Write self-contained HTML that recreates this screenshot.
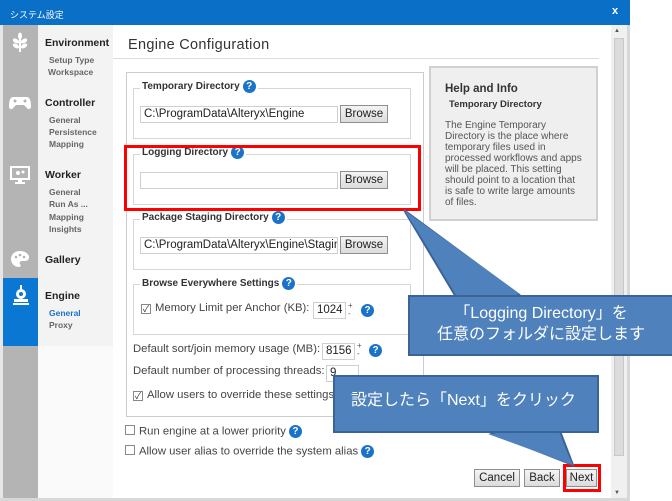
<!DOCTYPE html>
<html><head><meta charset="utf-8"><style>
*{margin:0;padding:0;box-sizing:border-box}
body{width:672px;height:501px;background:#fff;position:relative;overflow:hidden;font-family:"Liberation Sans","Noto Sans CJK JP",sans-serif;font-size:12px;color:#333}
.a{position:absolute}
.fs{position:absolute;border:1px solid #d6d6d6}
.lg{position:absolute;background:#fff;font-weight:bold;font-size:10px;color:#333;padding:0 2px;white-space:nowrap}
.q{display:inline-block;width:13px;height:13px;border-radius:50%;background:#1a73c8;color:#fff;font-size:10px;font-weight:bold;text-align:center;line-height:13px;vertical-align:middle;margin-left:3px}
.in{position:absolute;border:1px solid #cfcfcf;background:#fff;font-size:11.5px;line-height:15px;padding-left:3px;white-space:nowrap;overflow:hidden;color:#222}
.bt{position:absolute;border:1px solid #8f8f8f;background:linear-gradient(#f4f4f4,#dcdcdc);font-size:11.5px;text-align:center;line-height:16px;color:#222}
.t{position:absolute;white-space:nowrap;font-size:11.3px;color:#444}
.cb{display:inline-block;width:10px;height:10px;border:1px solid #888;background:#fff;vertical-align:-1px;margin-right:4px;font-size:9px;line-height:8px;text-align:center;color:#333}
.n1{position:absolute;left:45px;font-weight:bold;font-size:10.5px;color:#222}
.n2{position:absolute;left:49px;font-weight:bold;font-size:8.5px;color:#666}
.co{position:absolute;background:#4f81bd;border:2px solid #3b6496;color:#fff;font-size:16px;text-align:center}
</style></head><body>
<div class="a" style="left:0;top:0;width:630px;height:25px;background:#0a6fc7"></div>
<div class="a" style="left:10px;top:8px;color:#fff;font-size:9px">システム設定</div>
<div class="a" style="left:612px;top:5px;color:#fff;font-weight:bold;font-size:11px">x</div>
<div class="a" style="left:0;top:25px;width:3px;height:476px;background:#e6e6e6"></div>
<div class="a" style="left:3px;top:25px;width:35px;height:474px;background:#b4b4b4"></div>
<div class="a" style="left:38px;top:25px;width:75px;height:321px;background:#f3f3f3"></div>
<div class="a" style="left:38px;top:346px;width:75px;height:153px;background:#fafafa"></div>
<div class="a" style="left:3px;top:278px;width:35px;height:68px;background:#0a78d2"></div>
<svg class="a" style="left:10px;top:32px" width="20" height="22" viewBox="0 0 20 22"><g fill="#fff"><ellipse cx="10" cy="4" rx="2" ry="3.5"/><ellipse cx="6" cy="9" rx="3.5" ry="2" transform="rotate(30 6 9)"/><ellipse cx="14" cy="9" rx="3.5" ry="2" transform="rotate(-30 14 9)"/><ellipse cx="6" cy="14" rx="3.5" ry="2" transform="rotate(30 6 14)"/><ellipse cx="14" cy="14" rx="3.5" ry="2" transform="rotate(-30 14 14)"/><rect x="9" y="6" width="2" height="14"/></g></svg>
<svg class="a" style="left:9px;top:95px" width="22" height="16" viewBox="0 0 22 16"><path d="M4 2h14c3 0 4 5 4 9s-3 4-5 1l-2-2H7l-2 2c-2 3-5 3-5-1s1-9 4-9z" fill="#fff"/><circle cx="6" cy="6" r="1.5" fill="#b4b4b4"/><circle cx="16" cy="6" r="1.5" fill="#b4b4b4"/></svg>
<svg class="a" style="left:10px;top:166px" width="20" height="20" viewBox="0 0 20 20"><rect x="1" y="1" width="18" height="12" fill="none" stroke="#fff" stroke-width="2"/><rect x="8" y="13" width="4" height="3" fill="#fff"/><rect x="5" y="16" width="10" height="2" fill="#fff"/><circle cx="8" cy="7" r="2" fill="#fff"/><circle cx="13" cy="6" r="1.5" fill="#fff"/></svg>
<svg class="a" style="left:10px;top:250px" width="20" height="18" viewBox="0 0 20 18"><path d="M10 1C4 1 1 5 1 9s3 8 8 8c2 0 2-2 1-3s0-3 2-3h3c3 0 4-2 4-4C19 4 15 1 10 1z" fill="#fff"/><circle cx="6" cy="7" r="1.3" fill="#b4b4b4"/><circle cx="10" cy="5" r="1.3" fill="#b4b4b4"/><circle cx="14" cy="7" r="1.3" fill="#b4b4b4"/></svg>
<svg class="a" style="left:13px;top:285px" width="16" height="20" viewBox="0 0 16 20"><rect x="7" y="0" width="2" height="4" fill="#fff"/><circle cx="8" cy="9" r="5" fill="#fff"/><circle cx="8" cy="9" r="2" fill="#0a78d2"/><rect x="1" y="14" width="14" height="3" fill="#fff"/><rect x="0" y="18" width="16" height="2" fill="#fff"/></svg>
<div class="n1" style="top:37px">Environment</div>
<div class="n2" style="top:55px">Setup Type</div>
<div class="n2" style="top:67px;left:48px">Workspace</div>
<div class="n1" style="top:97px">Controller</div>
<div class="n2" style="top:115px">General</div>
<div class="n2" style="top:127px">Persistence</div>
<div class="n2" style="top:139px">Mapping</div>
<div class="n1" style="top:169px">Worker</div>
<div class="n2" style="top:187px">General</div>
<div class="n2" style="top:199px">Run As ...</div>
<div class="n2" style="top:212px">Mapping</div>
<div class="n2" style="top:224px">Insights</div>
<div class="n1" style="top:254px">Gallery</div>
<div class="n1" style="top:290px">Engine</div>
<div class="n2" style="top:308px;color:#1a73c8">General</div>
<div class="n2" style="top:320px">Proxy</div>
<div class="a" style="left:128px;top:37px;font-size:14.5px;color:#333;letter-spacing:.3px">Engine Configuration</div>
<div class="a" style="left:113px;top:58px;width:486px;height:1px;background:#ddd"></div>
<div class="fs" style="left:126px;top:72px;width:298px;height:345px;border-color:#ccc"></div>
<div class="fs" style="left:133px;top:88px;width:278px;height:51px"></div>
<div class="lg" style="left:140px;top:80px">Temporary Directory<span class="q">?</span></div>
<div class="in" style="left:140px;top:106px;width:198px;height:17px">C:\ProgramData\Alteryx\Engine</div>
<div class="bt" style="left:340px;top:105px;width:48px;height:18px">Browse</div>
<div class="fs" style="left:133px;top:154px;width:278px;height:51px"></div>
<div class="lg" style="left:140px;top:146px">Logging Directory<span class="q">?</span></div>
<div class="in" style="left:140px;top:172px;width:198px;height:17px"></div>
<div class="bt" style="left:340px;top:171px;width:48px;height:18px">Browse</div>
<div class="a" style="left:124px;top:145px;width:297px;height:66px;border:3px solid #f00"></div>
<div class="fs" style="left:133px;top:219px;width:278px;height:51px"></div>
<div class="lg" style="left:140px;top:211px">Package Staging Directory<span class="q">?</span></div>
<div class="in" style="left:140px;top:237px;width:198px;height:17px">C:\ProgramData\Alteryx\Engine\Staging</div>
<div class="bt" style="left:340px;top:236px;width:48px;height:18px">Browse</div>
<div class="fs" style="left:133px;top:284px;width:278px;height:51px"></div>
<div class="lg" style="left:140px;top:277px">Browse Everywhere Settings<span class="q">?</span></div>
<div class="t" style="left:141px;top:302px"><span class="cb">✓</span>Memory Limit per Anchor (KB):</div>
<div class="in" style="left:313px;top:302px;width:33px;height:17px">1024</div>
<div class="a" style="left:348px;top:302px;font-size:8px;line-height:8px;color:#555">+<br>-</div>
<div class="q a" style="left:358px;top:304px">?</div>
<div class="t" style="left:133px;top:343px">Default sort/join memory usage (MB):</div>
<div class="in" style="left:322px;top:343px;width:33px;height:17px">8156</div>
<div class="a" style="left:357px;top:342px;font-size:8px;line-height:8px;color:#555">+<br>-</div>
<div class="q a" style="left:366px;top:344px">?</div>
<div class="t" style="left:133px;top:365px">Default number of processing threads:</div>
<div class="in" style="left:326px;top:365px;width:33px;height:17px">9</div>
<div class="t" style="left:133px;top:389px"><span class="cb">✓</span>Allow users to override these settings</div>
<div class="t" style="left:125px;top:425px"><span class="cb"></span>Run engine at a lower priority<span class="q">?</span></div>
<div class="t" style="left:125px;top:445px"><span class="cb"></span>Allow user alias to override the system alias<span class="q">?</span></div>
<div class="a" style="left:429px;top:66px;width:169px;height:155px;background:#efefef;border:2px solid #d0d0d0"></div>
<div class="a" style="left:445px;top:83px;font-weight:bold;font-size:11.5px;color:#333">Help and Info</div>
<div class="a" style="left:449px;top:99px;font-weight:bold;font-size:9.5px;color:#333">Temporary Directory</div>
<div class="a" style="left:445px;top:120px;width:140px;font-size:10px;line-height:11px;color:#555">The Engine Temporary Directory is the place where temporary files used in processed workflows and apps will be placed. This setting should point to a location that is safe to write large amounts of files.</div>
<div class="bt" style="left:474px;top:469px;width:46px;height:18px">Cancel</div>
<div class="bt" style="left:524px;top:469px;width:36px;height:18px">Back</div>
<div class="bt" style="left:566px;top:469px;width:31px;height:18px">Next</div>
<div class="a" style="left:563px;top:464px;width:38px;height:28px;border:3px solid #f00"></div>
<div class="a" style="left:611px;top:25px;width:16px;height:474px;background:#f0f0f0"></div>
<div class="a" style="left:614px;top:38px;width:10px;height:418px;background:#dcdcdc;border:1px solid #c8c8c8"></div>
<div class="a" style="left:614px;top:28px;font-size:6px;color:#555">▲</div>
<div class="a" style="left:614px;top:490px;font-size:6px;color:#555">▼</div>
<div class="a" style="left:627px;top:25px;width:3px;height:474px;background:#d8d8d8"></div>
<div class="a" style="left:0;top:498px;width:630px;height:3px;background:#d8d8d8"></div>
<svg class="a" style="left:0;top:0" width="672" height="501"><path d="M404 210 L456 297 L522 297 Z" fill="#4f81bd" stroke="#3b6496" stroke-width="2"/><path d="M486 431 L573 465 L560 431 Z" fill="#4f81bd" stroke="#3b6496" stroke-width="2"/></svg>
<div class="co" style="left:408px;top:295px;width:266px;height:61px;padding-top:6px;line-height:21px">「Logging Directory」を<br>任意のフォルダに設定します</div>
<div class="co" style="left:333px;top:375px;width:266px;height:58px;padding-top:13px;line-height:22px;text-align:left;padding-left:16px">設定したら「Next」をクリック</div>
<svg class="a" style="left:0;top:0" width="672" height="501"><path d="M458 294 L520 294 L404 210 Z" fill="#4f81bd"/><path d="M488 434 L558 434 L573 465 Z" fill="#4f81bd"/></svg>
</body></html>
